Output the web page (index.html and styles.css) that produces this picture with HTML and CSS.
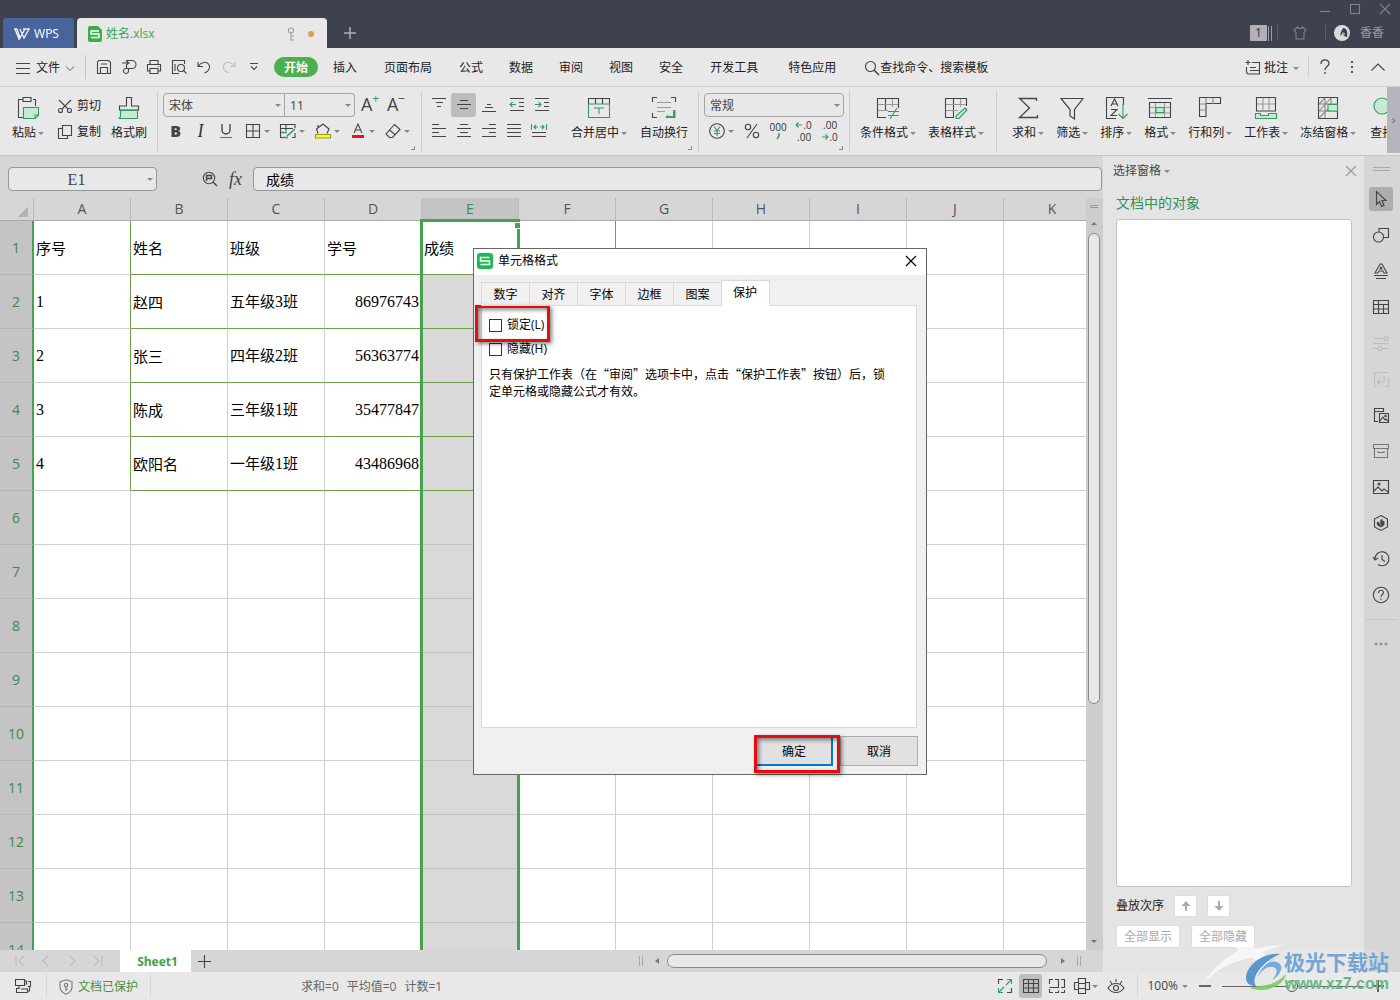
FILE: index.html
```html
<!DOCTYPE html>
<html lang="zh-CN">
<head>
<meta charset="utf-8">
<meta name="viewport" content="width=device-width, initial-scale=1">
<title>姓名.xlsx - WPS</title>
<link rel="stylesheet" href="styles.css">
</head>
<body>
<header class="titlebar">
  <button class="wps-tab"><svg class="ic" width="16" height="12" viewBox="0 0 16 12"><path d="M0 1h3M3 1l3 9 5-9M6 1l4 9 5-9H9M1 1l4 10 2-3" stroke-width="1.4"/></svg>WPS</button>
  <div class="doc-tab">
    <svg width="14" height="16" viewBox="0 0 14 16"><path d="M2 0h8l4 4v10a2 2 0 0 1-2 2H2a2 2 0 0 1-2-2V2a2 2 0 0 1 2-2z" fill="#3fae49"/><path d="M11 5H3v3h8v3.500H3" fill="none" stroke="#fff" stroke-width="1.400"/></svg>
    <span class="doc-name">姓名.xlsx</span>
    <svg class="ic faint" width="8" height="14" viewBox="0 0 8 14"><circle cx="4" cy="3.500" r="2.500"/><path d="M4 6v7h3M4 9h3"/></svg>
    <i class="dot"></i>
  </div>
  <button class="new-tab" aria-label="新建"><svg class="ic" width="12" height="12" viewBox="0 0 12 12"><path d="M6 0v12M0 6h12" stroke-width="1.500"/></svg></button>
  <div class="title-right">
    <div class="win-buttons">
      <button aria-label="最小化"><svg class="ic" width="10" height="10"><path d="M0 7.500h10"/></svg></button>
      <button aria-label="最大化"><svg class="ic" width="10" height="10"><path d="M.5.5h9v9h-9z"/></svg></button>
      <button aria-label="关闭"><svg class="ic" width="10" height="10"><path d="M0 0l10 10M10 0L0 10"/></svg></button>
    </div>
    <div class="account">
      <span class="badge">1</span><i class="bars"></i>
      <button class="skin" aria-label="皮肤"><svg class="ic" width="14" height="14" viewBox="0 0 14 14"><path d="M4.500 1L1 4l2 2.500V13h8V6.500L13 4 9.500 1C9 3 5 3 4.500 1z"/></svg></button>
      <svg class="avatar" width="16" height="16" viewBox="0 0 16 16"><circle cx="8" cy="8" r="8" fill="#d5dde2"/><path d="M9 3c4 0 5 4 4 9l-3-1-1-3-3 3 1-4z" fill="#413b43"/><path d="M8 7l3 1-1 4z" fill="#d79a87"/></svg>
      <span>香香</span>
    </div>
  </div>
</header>

<nav class="menubar">
  <button class="file-btn"><svg class="ic" width="14" height="11"><path d="M0 .5h14M0 5.500h14M0 10.500h14"/></svg>文件<svg class="ic faint" width="8" height="5"><path d="M0 .5l4 4 4-4"/></svg></button>
  <div class="quick">
    <button aria-label="保存"><svg class="ic" width="16" height="16" viewBox="0 0 16 16"><path d="M1.500 14V3L3 1.500h9.500l2 2V14.500h-13zM4.500 14V8.500h7V14M5 5h6"/></svg></button>
    <button aria-label="输出为PDF"><svg class="ic" width="16" height="16" viewBox="0 0 16 16"><path d="M1 4h8M5 1.500L7.500 4 5 6.500M6 1.500h5a4 4 0 0 1 0 8H5.500v-3M5.500 9.500a2.500 2.500 0 1 0 2 2.500V9.500"/></svg></button>
    <button aria-label="打印"><svg class="ic" width="16" height="16" viewBox="0 0 16 16"><path d="M4 5V1.500h8V5M4 12H1.500V5.500h13V12H12M4 9.500h8v5H4zM12 7.500h1"/></svg></button>
    <button aria-label="打印预览"><svg class="ic" width="16" height="16" viewBox="0 0 16 16"><path d="M8 14.500H1.500v-13h12V5M4 5v7"/><circle cx="10" cy="9" r="3.500"/><path d="M12.500 11.500l3 3"/></svg></button>
    <button aria-label="撤销"><svg class="ic" width="14" height="14" viewBox="0 0 14 14"><path d="M1 2v4.500h5M1 6.500C4 2 9 1 11.500 4s1 7-4 9"/></svg></button>
    <button aria-label="恢复"><svg class="ic ghost" width="14" height="14" viewBox="0 0 14 14"><path d="M13 2v4.500H8M13 6.500C10 2 5 1 2.500 4s-1 7 4 9"/></svg></button>
    <button aria-label="更多"><svg class="ic" width="8" height="8"><path d="M0 .5h8M1 3.500l3 3 3-3"/></svg></button>
  </div>
  <div class="tabs">
    <button class="active">开始</button><button>插入</button><button class="wide">页面布局</button><button>公式</button><button>数据</button><button>审阅</button><button>视图</button><button>安全</button><button class="wide">开发工具</button><button class="wide last">特色应用</button>
  </div>
  <button class="search"><svg class="ic" width="16" height="16" viewBox="0 0 16 16"><circle cx="6.500" cy="6.500" r="5"/><path d="M10 10l5 5" stroke-width="1.600"/></svg>查找命令、搜索模板</button>
  <div class="menu-right">
    <button class="comment"><svg class="ic" width="16" height="16" viewBox="0 0 16 16"><path d="M3 0v5M.5 2.500h5M7 2.500h7.500V14H3l-1.500-1.500V7M5 7.500h6M5 10.500h9"/></svg>批注<i class="caret"></i></button>
    <button class="help" aria-label="帮助"><svg class="ic" width="10" height="16" viewBox="0 0 10 16"><path d="M1 5C1-.5 9-.5 9 4.500c0 3-4 3-4 6.500M5 13v2" stroke-width="1.300"/></svg></button>
    <button class="opts" aria-label="选项"><svg width="4" height="14"><path d="M1 1h2v2H1zM1 6h2v2H1zM1 11h2v2H1z" fill="#555"/></svg></button>
    <button class="fold" aria-label="收起功能区"><svg class="ic" width="14" height="8"><path d="M.5 7.500L7 1l6.500 6.500"/></svg></button>
  </div>
</nav>

<section class="ribbon">
  <div class="group g-clip">
    <button class="big"><svg class="ic" width="24" height="24" viewBox="0 0 24 24"><path d="M7 3.500H2.500v18H7M17 3.500h2.500V10M7 1.500h8v4H7z"/><path class="gf" d="M7.500 11.500h15v8l-3.500 3H7.500z"/><path class="g" d="M22.500 19H19v3"/></svg><span>粘贴<i class="caret"></i></span></button>
    <div class="rows">
      <button class="txt"><svg class="ic" width="16" height="16" viewBox="0 0 16 16"><circle cx="3.500" cy="12.500" r="2"/><circle cx="12.500" cy="12.500" r="2"/><path d="M2 2l9 9M14 2l-9 9"/></svg>剪切</button>
      <button class="txt"><svg class="ic" width="16" height="16" viewBox="0 0 16 16"><path d="M5.500 1.500h9v10h-9zM5 4.500H1.500v10h9V12"/></svg>复制</button>
    </div>
    <button class="big"><svg class="ic" width="24" height="24" viewBox="0 0 24 24"><path d="M9.500 10V1.500h5V10h7v4h-19v-4z"/><path class="gf" d="M3.500 14.500h17v8h-19c2 0 2-2 2-3z"/></svg><span>格式刷</span></button>
  </div>

  <div class="group g-font">
    <div class="rows">
      <div class="row">
        <div class="joined">
          <span class="sel w-font"><select aria-label="字体"><option>宋体</option></select></span>
          <span class="sel w-size"><select aria-label="字号"><option>11</option></select></span>
        </div>
        <button class="sm letter" aria-label="增大字号">A<sup>+</sup></button>
        <button class="sm letter" aria-label="减小字号">A<sup class="k">−</sup></button>
      </div>
      <div class="row">
        <button class="sm bold" aria-label="加粗">B</button>
        <button class="sm ital" aria-label="倾斜">I</button>
        <button class="sm" aria-label="下划线"><svg class="ic" width="14" height="16" viewBox="0 0 14 16"><path d="M3 1v6a4 4 0 0 0 8 0V1" stroke-width="1.400"/><path class="g" d="M1 14.500h12"/></svg></button>
        <button class="smc" aria-label="边框"><svg class="ic" width="16" height="16"><path d="M1.500 1.500h13v13h-13zM8 2v12M2 8h12"/></svg><i class="caret"></i></button>
        <button class="smc" aria-label="绘图边框"><svg class="ic" width="16" height="16"><path d="M15 5V1.500H.5V14.500H5M1 5.500h12M6 2v6M15 10v4.500h-3"/><path class="g" d="M1 9.500h6M7 13l8-7M3 14.500h5" stroke-width="1.600"/></svg><i class="caret"></i></button>
        <button class="smc" aria-label="填充颜色"><svg class="ic" width="16" height="16"><path d="M3 10.500L1.500 6 8 1l6 5-2 4.500M3 4.500V2"/><path d="M.5 11.500h15v3.500H.5z" fill="#ff0" stroke="#9a9a30"/></svg><i class="caret"></i></button>
        <button class="smc" aria-label="字体颜色"><svg class="ic" width="16" height="16"><path d="M4 10l4-9 4 9M5.500 7h5"/><path d="M2 12h12v3H2z" fill="#e11" stroke="none"/></svg><i class="caret"></i></button>
        <button class="smc" aria-label="清除"><svg class="ic" width="16" height="16"><path d="M9.500 1.500l5.500 5-7.500 8h-3L1 11zM4.500 7l6 5"/></svg><i class="caret"></i></button>
      </div>
    </div>
    <i class="launcher"></i>
  </div>

  <div class="group g-align">
    <div class="rows">
      <div class="row">
        <button class="sm" aria-label="顶端对齐"><svg class="ic" width="16" height="16"><path d="M1 1.500h14M5 5.500h7M6 9.500h4"/></svg></button>
        <button class="sm on" aria-label="垂直居中"><svg class="ic" width="16" height="16"><path d="M4 3.500h8M1 7.500h14M4 11.500h8"/></svg></button>
        <button class="sm" aria-label="底端对齐"><svg class="ic" width="16" height="16"><path d="M6 7.500h4M4 10.500h8M1 14.500h14"/></svg></button>
        <button class="sm indent" aria-label="减少缩进"><svg class="ic" width="16" height="16"><path d="M1 1.500h14M10 5.500h5M10 9.500h5M1 13.500h14"/><path class="g" d="M1 7.500h6M3.500 5L1 7.500 3.500 10"/></svg></button>
        <button class="sm" aria-label="增加缩进"><svg class="ic" width="16" height="16"><path d="M1 1.500h14M10 5.500h5M10 9.500h5M1 13.500h14"/><path class="g" d="M1 7.500h6M4.500 5L7 7.500 4.500 10"/></svg></button>
      </div>
      <div class="row">
        <button class="sm" aria-label="左对齐"><svg class="ic" width="16" height="16"><path d="M1 1.500h7M1 5.500h14M1 9.500h7M1 13.500h14"/></svg></button>
        <button class="sm" aria-label="水平居中"><svg class="ic" width="16" height="16"><path d="M4 1.500h8M1 5.500h14M4 9.500h8M1 13.500h14"/></svg></button>
        <button class="sm" aria-label="右对齐"><svg class="ic" width="16" height="16"><path d="M8 1.500h7M1 5.500h14M8 9.500h7M1 13.500h14"/></svg></button>
        <button class="sm" aria-label="两端对齐"><svg class="ic" width="16" height="16"><path d="M1 1.500h14M1 5.500h14M1 9.500h14M1 13.500h14"/></svg></button>
        <button class="sm" aria-label="分散对齐"><svg class="ic" width="16" height="16"><path d="M1 9.500h14M1 13.500h14"/><path class="g" d="M.5 1v6M15.500 1v6M3 4h4M9 4h4M5 2L3 4l2 2M11 2l2 2-2 2"/></svg></button>
      </div>
    </div>
    <button class="big merge"><svg class="ic" width="24" height="24" viewBox="0 0 24 24"><path d="M1.500 8V2.500h21V8M8.500 2.500V8M15.500 2.500V8"/><path class="g" d="M1.500 8v13.500h21V8zM7 12h10M12 12v6"/></svg><span>合并居中<i class="caret"></i></span></button>
    <button class="big"><svg class="ic" width="24" height="24" viewBox="0 0 24 24"><path d="M.5 6V1.500H5M19 1.500h4.500V6M.5 17v4.500H5"/><path d="M5 6.500h14M5 11.500h14M5 15.500h8" stroke="#999"/><path d="M23.500 14v8H13l3-3.500V20h5v-6z" fill="#35a15e" stroke="none"/></svg><span>自动换行</span></button>
    <i class="launcher"></i>
  </div>

  <div class="group g-num">
    <div class="rows">
      <span class="sel w-num"><select aria-label="数字格式"><option>常规</option></select></span>
      <div class="row">
        <button class="smc" aria-label="货币"><svg class="ic" width="16" height="16"><circle cx="8" cy="8" r="7.300"/><path class="g" d="M5 3.500l3 4 3-4M8 7v6M5 8h6M5 10.500h6"/></svg><i class="caret"></i></button>
        <button class="sm" aria-label="百分比"><svg class="ic" width="16" height="16"><circle cx="4" cy="4" r="2.700"/><circle cx="12" cy="12" r="2.700"/><path d="M13 1L3 15"/></svg></button>
        <button class="sm tiny" aria-label="千位分隔"><span>000</span><svg class="ic" width="4" height="8"><path class="g" d="M2 1h1v2L1 6" stroke-width="1.500"/></svg></button>
        <button class="sm tiny" aria-label="增加小数"><span><svg class="ic" width="6" height="6"><path class="g" d="M0 3h6M2.500.5L0 3l2.500 2.500"/></svg>.0</span><span>.00</span></button>
        <button class="sm tiny" aria-label="减少小数"><span>.00</span><span><svg class="ic" width="6" height="6"><path class="g" d="M0 3h6M3.500.5L6 3 3.500 5.500"/></svg>.0</span></button>
      </div>
    </div>
    <i class="launcher"></i>
  </div>

  <div class="group g-style">
    <button class="big"><svg class="ic" width="24" height="24" viewBox="0 0 24 24"><path d="M10 21.500H1.500v-19h21V12M9.500 3v12"/><path d="M2 8.500h20M2 14.500h10M16.500 3v8" stroke="#999"/><path class="g" d="M12 15.500h11M12 19.500h11M21 12l-7 11"/></svg><span>条件格式<i class="caret"></i></span></button>
    <button class="big"><svg class="ic" width="24" height="24" viewBox="0 0 24 24"><path d="M10 21.500H1.500v-19h21V10M9.500 3v18"/><path d="M2 8.500h20M2 14.500h12M16.500 3v8" stroke="#999"/><path class="gf" d="M21 12l2 2-8 8.500h-3V20z"/></svg><span>表格样式<i class="caret"></i></span></button>
  </div>

  <div class="group g-data">
    <button class="big"><svg class="ic" width="24" height="24" viewBox="0 0 24 24"><path d="M20.500 5V2.500h-17l10 9.500-10 9.500h18V19" stroke-width="1.300"/></svg><span>求和<i class="caret"></i></span></button>
    <button class="big"><svg class="ic" width="24" height="24" viewBox="0 0 24 24"><path d="M1 2.500h22l-8.500 11V23L10 20v-6.500z" stroke-width="1.200"/></svg><span>筛选<i class="caret"></i></span></button>
    <button class="big"><svg class="ic" width="24" height="24" viewBox="0 0 24 24"><path d="M12 22.500H2.500v-21h17V9M7 10l3.500-7 3.500 7M8 8h5M7 13.500h6l-6 6h6"/><path class="g" d="M19 8v14M14.500 18l4.500 4.500 4.500-4.500"/></svg><span>排序<i class="caret"></i></span></button>
    <button class="big"><svg class="ic" width="24" height="24" viewBox="0 0 24 24"><path d="M0 2.500h24M1.500 6.500h21v15h-21z"/><path d="M2 11.500h20M2 17h20M7.500 7v14M16.500 7v14" stroke="#999"/><path class="gf" d="M8 11.500h8v5H8z"/></svg><span>格式<i class="caret"></i></span></button>
    <button class="big"><svg class="ic" width="24" height="24" viewBox="0 0 24 24"><path d="M1.500 1.500h21v6H8v13H1.500z"/><path d="M8 2v6H2M15 2v6M2 14h6" stroke="#888"/></svg><span>行和列<i class="caret"></i></span></button>
    <button class="big"><svg class="ic" width="24" height="24" viewBox="0 0 24 24"><path d="M2.500 15V1.500h19V15z"/><path d="M3 8h18M9 2v13M15 2v13" stroke="#999"/><path class="gf" d="M1.500 17.500h5v2h8v-2h8v5h-21z"/></svg><span>工作表<i class="caret"></i></span></button>
    <button class="big"><svg class="ic" width="24" height="24" viewBox="0 0 24 24"><path d="M2.500 1.500h19v21h-19z"/><path d="M9 2v20M15 2v6M3 8h18M3 15h18M3 8l6-6M3 15L15 2M3 22l9-9" stroke="#888"/><path class="gf" d="M12 8.500h9.500v6.500H12z"/></svg><span>冻结窗格<i class="caret"></i></span></button>
    <button class="big find"><svg class="ic" width="24" height="24" viewBox="0 0 24 24"><circle class="gf" cx="12" cy="10" r="8"/></svg><span>查找</span></button>
  </div>
  <button class="ribbon-more" aria-label="更多功能">›</button>
</section>

<main class="work">
  <section class="left">
    <div class="formula">
      <label class="name-box"><input aria-label="名称框" value="E1"></label>
      <button class="fx-zoom" aria-label="浏览"><svg class="ic" width="16" height="16"><circle cx="7" cy="7" r="5.700"/><path d="M4.500 10V4.500h5v3h-5M11 11l4 4" stroke-width="1.500"/></svg></button>
      <button class="fx" aria-label="插入函数">fx</button>
      <input class="fx-input" aria-label="编辑栏" value="成绩">
    </div>
    <div class="grid-area">
      <div class="sheet">
        <table>
          <colgroup><col class="c-head"><col span="11" class="c"></colgroup>
          <thead><tr><th class="corner"></th><th>A<th>B<th>C<th>D<th class="sel-h">E<th>F<th>G<th>H<th>I<th>J<th>K</tr></thead>
          <tbody>
          <tr class="b"><th>1<td>序号<td>姓名<td>班级<td>学号<td class="act">成绩<td><td><td><td><td><td></tr>
          <tr class="b"><th>2<td><span class="n">1</span><td>赵四<td>五年级<span class="n">3</span>班<td class="r n">86976743<td class="e"><td><td><td><td><td><td></tr>
          <tr class="b"><th>3<td><span class="n">2</span><td>张三<td>四年级<span class="n">2</span>班<td class="r n">56363774<td class="e"><td><td><td><td><td><td></tr>
          <tr class="b"><th>4<td><span class="n">3</span><td>陈成<td>三年级<span class="n">1</span>班<td class="r n">35477847<td class="e"><td><td><td><td><td><td></tr>
          <tr class="b"><th>5<td><span class="n">4</span><td>欧阳名<td>一年级<span class="n">1</span>班<td class="r n">43486968<td class="e"><td><td><td><td><td><td></tr>
          <tr><th>6<td><td><td><td><td class="e"><td><td><td><td><td><td></tr>
          <tr><th>7<td><td><td><td><td class="e"><td><td><td><td><td><td></tr>
          <tr><th>8<td><td><td><td><td class="e"><td><td><td><td><td><td></tr>
          <tr><th>9<td><td><td><td><td class="e"><td><td><td><td><td><td></tr>
          <tr><th>10<td><td><td><td><td class="e"><td><td><td><td><td><td></tr>
          <tr><th>11<td><td><td><td><td class="e"><td><td><td><td><td><td></tr>
          <tr><th>12<td><td><td><td><td class="e"><td><td><td><td><td><td></tr>
          <tr><th>13<td><td><td><td><td class="e"><td><td><td><td><td><td></tr>
          <tr><th>14<td><td><td><td><td class="e"><td><td><td><td><td><td></tr>
          </tbody>
        </table>
        <div class="selection"><i></i></div>
      </div>
      <div class="vscroll"><i class="split"></i><i class="arrow up"></i><i class="thumb"></i><i class="arrow down"></i></div>
    </div>
    <div class="sheetbar">
      <div class="sheet-nav">
        <button aria-label="第一个"><svg class="ic" width="10" height="10"><path d="M1 0v10M9 0L4 5l5 5"/></svg></button>
        <button aria-label="上一个"><svg class="ic" width="10" height="10"><path d="M7 0L2 5l5 5"/></svg></button>
        <button aria-label="下一个"><svg class="ic" width="10" height="10"><path d="M3 0l5 5-5 5"/></svg></button>
        <button aria-label="最后一个"><svg class="ic" width="10" height="10"><path d="M9 0v10M1 0l5 5-5 5"/></svg></button>
      </div>
      <button class="sheet-tab">Sheet1</button>
      <button class="sheet-add" aria-label="新建工作表"><svg class="ic" width="14" height="14"><path d="M7.500 1v13M1 7.500h13"/></svg></button>
      <div class="hscroll"><i class="grip"></i><i class="arrow lt"></i><i class="thumb"></i><i class="arrow rt"></i><i class="grip"></i></div>
    </div>
  </section>

  <aside class="pane">
    <div class="pane-head"><span>选择窗格<i class="caret"></i></span><button aria-label="关闭窗格"><svg class="ic faint" width="10" height="10"><path d="M0 0l10 10M10 0L0 10"/></svg></button></div>
    <h2>文档中的对象</h2>
    <div class="objects"></div>
    <div class="order"><span>叠放次序</span>
      <button aria-label="上移"><svg width="10" height="10"><path d="M5 0l4.500 5H6v5H4V5H.5z" fill="#aaa"/></svg></button>
      <button aria-label="下移"><svg width="10" height="10"><path d="M5 10l4.500-5H6V0H4v5H.5z" fill="#aaa"/></svg></button>
    </div>
    <div class="showhide"><button>全部显示</button><button>全部隐藏</button></div>
  </aside>

  <aside class="strip">
    <i class="handle"></i>
    <button class="on" aria-label="选择"><svg class="ic" width="18" height="18"><path d="M4.500 1.500v13l3-3 2 5 2.500-1-2-5h4z"/></svg></button>
    <button aria-label="形状"><svg class="ic" width="18" height="18"><path d="M7 6V2.500h9.500v9H12"/><circle cx="6.500" cy="11" r="5"/></svg></button>
    <button aria-label="艺术字"><svg class="ic" width="18" height="18"><path d="M3 11L8 2h2l5 9h-3l-1-2H7l-1 2zM8 7l1-2 1 2zM2 13.500h14M4 16.500h10"/></svg></button>
    <button aria-label="表格"><svg class="ic" width="18" height="18"><path d="M1.500 2.500h15v13h-15zM2 6.500h14M2 11h14M6.500 3v12M11.500 7v8"/></svg></button>
    <button aria-label="属性"><svg class="ic ghost" width="18" height="18"><path d="M1 4.500h11M16 4.500h1M1 9.500h15M1 14.500h5M10 14.500h7"/><circle cx="14" cy="4.500" r="2"/><circle cx="8" cy="14.500" r="2"/></svg></button>
    <button aria-label="替换"><svg class="ic ghost" width="18" height="18"><path d="M5 16.500H2.500v-14h9M16.500 7v9.500H13M6 12h6V6M8 9.500L5.500 12 8 14.500M12 2.500h4.500"/></svg></button>
    <button aria-label="图库"><svg class="ic" width="18" height="18"><path d="M6 15.500H2.500v-13h9V6M3 5.500h8M7.500 7.500h9v9h-9zM8 15l3-4 2 3 1-1 2 2"/><circle cx="13.500" cy="10" r=".8"/></svg></button>
    <button aria-label="素材"><svg class="ic mid" width="18" height="18"><path d="M1.500 2.500h15v4h-15zM2.500 6.500h13v9h-13zM6 9v1.500h6V9"/></svg></button>
    <button aria-label="图片"><svg class="ic" width="18" height="18"><path d="M1.500 2.500h15v13h-15zM2 13l4-4 4 4 2-2 4 3"/><circle cx="7" cy="6" r="1"/></svg></button>
    <button aria-label="稻壳"><svg class="ic" width="18" height="18"><path d="M9 1.500l6.500 3.500v8L9 16.500 2.500 13V5z"/><path d="M9 13c-4-1-4-3-4-5 2 0 3 1 4 5 3-1 4-3 3-6-2 0-3 2-3 6M9 10c-1-2-1-4 1-5 0 2 1 3-1 5" fill="#444" stroke-width=".5"/></svg></button>
    <button aria-label="历史"><svg class="ic" width="18" height="18"><path d="M3 9a7 7 0 1 1 3 5.500M1 7l2 3 3-2M10 5v4.500l3 2"/></svg></button>
    <button aria-label="帮助中心"><svg class="ic" width="18" height="18"><circle cx="9" cy="9" r="7.700"/><path d="M6.500 7c0-3.500 5-3.500 5-.5 0 2-2.500 2-2.500 4.500M9 12.500v1.500"/></svg></button>
    <hr>
    <button class="dots" aria-label="更多"><svg width="14" height="4"><g fill="none" stroke="#777"><circle cx="2" cy="2" r="1"/><circle cx="7" cy="2" r="1"/><circle cx="12" cy="2" r="1"/></g></svg></button>
  </aside>
</main>

<footer class="status">
  <button class="st-mode" aria-label="宏"><svg class="ic" width="18" height="16"><path d="M1.500 1.500h9v6h-9zM10.500 3h2v3h-2M14 3.500h2.500v5H14M5 7.500v3H2.500v4h11V11H7M13.500 13h2V8"/></svg></button>
  <div class="protect"><svg class="ic mid" width="16" height="16"><path d="M8 .8l6 2V8c0 3.500-3 6-6 7.300C5 14 2 11.500 2 8V2.800z"/><circle cx="8" cy="6" r="1.700"/><path d="M8 8v4M8 10h2"/></svg>文档已保护</div>
  <div class="stats"><span>求和=0</span><span>平均值=0</span><span>计数=1</span></div>
  <div class="views">
    <button aria-label="全屏"><svg class="ic" width="16" height="16"><path d="M1.500 6V1.500H6M14.500 10v4.500H10"/><path class="g" d="M9 7l5.500-5.500M10 1.500h4.500V6M7 9l-5.500 5.500M1.500 10v4.500H6"/></svg></button>
    <button class="on" aria-label="普通视图"><svg class="ic" width="16" height="16"><path d="M.5 1.500h15v13H.5zM1 5.500h14M1 10h14M5.500 2v12M10.500 2v12"/></svg></button>
    <button aria-label="分页预览"><svg class="ic" width="16" height="16"><path d="M.5 6V1.500H4M6 1.500h3.500v8H.5M12 1.500h3.500V9.500H12M.5 11v3.500H4M6 14.500h3.500v-2M12 14.500h3.500V12"/></svg></button>
    <button class="vc" aria-label="阅读模式"><svg class="ic" width="16" height="16"><path d="M4.500.5h7v15h-7zM4.500 5.500h7M4.500 10.500h7M4 4.500H.5v7H4M12 4.500h3.500v7H12"/></svg><i class="caret"></i></button>
    <button aria-label="护眼模式"><svg class="ic" width="18" height="16"><path d="M1 10c4-6 12-6 16 0-4 6-12 6-16 0zM9 1v3M3 3l2 3M15 3l-2 3"/><circle cx="9" cy="10" r="2.500"/></svg></button>
  </div>
  <div class="zoom">
    <button>100%<i class="caret"></i></button>
    <button class="minus" aria-label="缩小"><svg class="ic" width="12" height="12"><path d="M0 6h12" stroke-width="1.600"/></svg></button>
    <input type="range" min="0" max="100" value="50" aria-label="缩放">
    <button class="plus" aria-label="放大"><svg class="ic" width="12" height="12"><path d="M0 6h12M6 0v12" stroke-width="1.600"/></svg></button>
  </div>
</footer>

<section class="dialog" role="dialog" aria-label="单元格格式">
  <div class="dlg-title">
    <svg width="16" height="16"><rect width="16" height="16" rx="3" fill="#1dba50"/><path d="M12.500 4.500h-9v3.500h9v3.500h-9" fill="none" stroke="#fff" stroke-width="1.500"/></svg>
    <span>单元格格式</span>
    <button aria-label="关闭"><svg class="ic" width="10" height="10"><path d="M0 0l10 10M10 0L0 10" stroke="#000"/></svg></button>
  </div>
  <div class="dlg-tabs"><button>数字</button><button>对齐</button><button>字体</button><button>边框</button><button>图案</button><button class="active">保护</button></div>
  <div class="dlg-body">
    <label><input type="checkbox">锁定(L)</label>
    <label><input type="checkbox">隐藏(H)</label>
    <p>只有保护工作表（在“审阅”选项卡中，点击“保护工作表”按钮）后，锁定单元格或隐藏公式才有效。</p>
  </div>
  <div class="dlg-foot"><button class="ok">确定</button><button>取消</button></div>
  <i class="mark mark-lock"></i>
  <i class="mark mark-ok"></i>
</section>

<div class="watermark">
  <svg class="wm-streak" width="190" height="48" viewBox="0 0 190 48"><path d="M2 46C14 28 28 16 40 10L22 0l36 8 28-4-22 8 8 14-20-8C28 22 12 34 2 46z" fill="#fff" opacity=".65"/><path d="M50 10l130 0-8 34-90 0z" fill="#fff" opacity=".12"/></svg>
  <svg class="wm-logo" width="46" height="40" viewBox="0 0 46 40"><path d="M36 2C18 0 2 14 2 26c0 6 5 8 10 8-5-6 2-22 24-32z" fill="#4b8fc9"/><path d="M32 6c-10 4-18 14-18 20 2-7 9-12 15-11 5 1 5 6-1 13 10-6 13-16 4-18-2-1-5 0-8 1z" fill="#69a6d8"/><path d="M6 36c14 6 34-2 36-14-8 8-16 12-28 12z" fill="#7ccb62"/></svg>
  <div class="wm-text"><strong>极光下载站</strong><span>www.xz7.com</span></div>
</div>
</body>
</html>
```
FILE: styles.css
```css
* { box-sizing: border-box; }

body {
  margin: 0;
  height: 100vh;
  display: flex;
  flex-direction: column;
  position: relative;
  overflow: hidden;
  background: #e8e8e8;
  color: #222;
  font: 12px/16px "Open Sans", "Noto Sans CJK SC", sans-serif;
}

button, input, select { font: inherit; color: inherit; }
button { border: 0; background: none; padding: 0; display: flex; align-items: center; justify-content: center; white-space: nowrap; }
svg { display: block; flex: none; }

.ic { fill: none; stroke: #444; stroke-width: 1.1; overflow: visible; }
.ic .g { stroke: #2f9d60; }
.ic .gf { stroke: #2f9d60; fill: #c5ecd2; }
.faint { stroke: #999; }
.mid { stroke: #777; }
.ghost { stroke: #bdbdbd; }

.caret { width: 0; height: 0; border: 3px solid transparent; border-top-color: #888; border-bottom: 0; margin-left: 2px; flex: none; }

/* title bar */
.titlebar { flex: none; height: 48px; background: #3e424e; display: flex; align-items: flex-end; padding-left: 3px; color: #9a9ca6; }
.wps-tab { width: 71px; height: 30px; gap: 4px; padding: 2px 4px 0 0; background: #47649b; border-radius: 3px 3px 0 0; color: #fff; }
.wps-tab .ic { stroke: #eee; }
.doc-tab { width: 250px; height: 30px; margin-left: 3px; padding: 2px 13px 0 11px; display: flex; align-items: center; gap: 4px; background: #e8e8e8; border-radius: 4px 4px 0 0; color: #3fa447; }
.doc-name { flex: 1; }
.dot { width: 6px; height: 6px; margin-left: 9px; border-radius: 3px; background: #dd9c58; }
.new-tab { width: 46px; height: 30px; }
.new-tab .ic { stroke: #aeb0b8; }
.title-right { margin-left: auto; height: 48px; display: flex; flex-direction: column; align-items: flex-end; }
.win-buttons { display: flex; height: 18px; gap: 20px; padding-right: 10px; }
.win-buttons .ic, .skin .ic { stroke: #81838d; }
.account { display: flex; height: 30px; align-items: center; padding-right: 16px; }
.badge { width: 17px; height: 16px; background: #b0b1b8; color: #333; text-align: center; border-radius: 1px; }
.bars { width: 4px; height: 15px; border: solid #9a9ca6; border-width: 0 1px; margin-left: 1px; }
.skin { width: 49px; height: 16px; margin: 0 8px 0 5px; padding-right: 3px; border: solid #5a5d68; border-width: 0 1px; }
.avatar { margin-right: 10px; }

/* menu bar */
.menubar { flex: none; height: 39px; display: flex; align-items: center; border-bottom: 1px solid #d0d0d0; padding-left: 16px; }
.file-btn { gap: 6px; padding: 2px 11px 0 0; height: 24px; border-right: 1px solid #c4c4c4; }
.quick { display: flex; padding-left: 5px; }
.quick button { width: 25px; height: 24px; }
.tabs { display: flex; margin-left: 8px; }
.tabs button { height: 20px; padding: 2px 13px 0; }
.tabs .wide { padding: 2px 14px 0; }
.tabs .active { width: 44px; padding: 1px 0 0; margin-right: 2px; border-radius: 10px; background: #4caf50; color: #fff; font-weight: bold; }
.tabs .last { padding-left: 16px; }
.search { margin-left: 14px; padding-top: 1px; }
.menu-right { margin-left: auto; display: flex; align-items: center; padding-right: 15px; }
.menu-right .comment { gap: 3px; height: 22px; padding: 2px 9px 0 0; border-right: 1px solid #d2d2d2; }
.help { margin-left: 11px; }
.opts { margin-left: 20px; }
.fold { margin-left: 17px; }

/* ribbon */
.ribbon { flex: none; height: 69px; display: flex; position: relative; z-index: 1; overflow: hidden; border-bottom: 1px solid #c6c6c6; }
.group { flex: none; display: flex; position: relative; }
.group + .group::before { content: ""; width: 1px; margin: 4px 0; background: #ccc; }
.big { flex-direction: column; justify-content: flex-start; padding-top: 9px; gap: 5px; }
.big span { display: flex; align-items: center; }
.rows { display: flex; flex-direction: column; gap: 2px; padding-top: 6px; }
.row { display: flex; height: 24px; align-items: center; }
.txt { height: 24px; gap: 4px; padding-top: 1px; }
.g-clip { padding-left: 12px; padding-right: 10px; }
.g-clip .rows { margin: 0 10px 0 13px; }
.g-font { padding-right: 8px; }
.g-font .rows, .g-num .rows { padding-left: 5px; }
.g-align { padding-right: 10px; }
.g-align .rows { margin-right: 17px; padding-left: 4px; }
.indent { margin-left: 3px; }
.g-align .merge { margin-right: 13px; }
.g-num { padding-right: 5px; }
.g-num .smc { padding-left: 5px; }
.g-num .sm { width: 26px; }
.g-style { gap: 12px; padding-right: 12px; }
.g-style::before { margin-right: -2px !important; }
.g-data { gap: 12px; }
.g-data::before { margin-right: 3px !important; }
.find { margin-left: 2px; }
.sm { width: 25px; height: 24px; }
.sm.on { background: #bdbdbd; border-radius: 3px; }
.smc { width: 35px; height: 24px; padding-left: 7px; justify-content: flex-start; }
.smc .caret { margin-left: 3px; }
.letter { width: 26px; font-size: 18px; color: #444; align-items: flex-start; line-height: 22px; }
.joined + .letter { margin-left: 2px; }
.letter sup { font-size: 12px; line-height: 12px; color: #2f9d60; }
.letter .k { color: #444; }
.bold { font-weight: 800; font-size: 16px; color: #444; }
.ital { font: italic 18px/24px "Liberation Serif", serif; color: #333; }
.tiny { flex-direction: column; font-size: 10px; line-height: 12px; color: #333; }
.tiny span { display: flex; align-items: center; gap: 1px; height: 12px; }
.joined { display: flex; }
.joined .sel + .sel select { border-left: 0; border-radius: 0 4px 4px 0; }
.joined .sel:first-child select { border-radius: 4px 0 0 4px; }
.sel { position: relative; display: block; height: 24px; }
.sel select { appearance: none; width: 100%; height: 24px; border: 1px solid #a4a4a4; border-radius: 4px; background: #e8e8e8; padding: 1px 5px 0; color: #444; }
.sel::after, .name-box::after { content: ""; position: absolute; right: 4px; top: 11px; border: 3px solid transparent; border-top-color: #888; border-bottom: 0; }
.w-font { width: 122px; }
.w-size { width: 70px; }
.w-num { width: 140px; }
.launcher { position: absolute; right: 6px; bottom: 5px; width: 4px; height: 4px; border: solid #888; border-width: 0 1px 1px 0; }
.ribbon-more { position: absolute; right: 0; top: 0; width: 13px; height: 66px; background: #b5b6bd; color: #666; }

/* work area */
.work { flex: 1; min-height: 0; display: flex; background: #d6d6d6; }
.left { flex: 1; min-width: 0; display: flex; flex-direction: column; }
.formula { flex: none; height: 42px; display: flex; align-items: flex-start; padding: 11px 1px 0 8px; }
.name-box { position: relative; width: 149px; margin-right: 45px; }
.name-box input, .fx-input { width: 100%; height: 24px; border: 1px solid #979797; border-radius: 4px; background: #e8e8e8; }
.name-box input { text-align: center; padding: 2px 16px 0 4px; font: 16px/20px "Liberation Serif", serif; color: #444; }
.fx-zoom { height: 24px; }
.fx { width: 35px; height: 24px; font: italic 18px/24px "Liberation Serif", serif; color: #444; }
.fx-input { flex: 1; padding: 0 12px; font-size: 14px; color: #000; }
.grid-area { flex: 1; min-height: 0; display: flex; }
.sheet { flex: 1; min-width: 0; overflow: hidden; position: relative; background: #fff; }
table { table-layout: fixed; width: 1101px; border-collapse: separate; border-spacing: 0; }
.c-head { width: 34px; }
.c { width: 97px; }
th { font-weight: normal; font-size: 14px; padding: 0; }
thead th { height: 23px; background: #d6d6d6; color: #555; border-right: 1px solid #bbb; border-bottom: 1px solid #aaa; }
thead .corner { border-right: 1px solid #bbb; background: linear-gradient(135deg, #d6d6d6 50%, #b4b4b4 50%) right 5px bottom 3px / 11px 11px no-repeat #d6d6d6; }
thead .sel-h { background: #c4c4c4; color: #3c8a45; }
tbody th { height: 54px; background: #c4c4c4; color: #3c8a45; border-right: 2px solid #47a34b; border-bottom: 1px solid #b4b4b4; }
td { height: 54px; padding: 0 2px; border-right: 1px solid #d0d0d0; border-bottom: 1px solid #d0d0d0; font-size: 15px; line-height: 20px; color: #000; white-space: nowrap; }
.e { background: #d9d9d9; border-bottom-color: #c2c2c2; }
.b td:nth-child(2) { border-right-color: #6f9f48; }
.b td:nth-child(n+3):nth-child(-n+7) { border-bottom-color: #6f9f48; }
.b td:nth-child(7) { border-right-color: #6f9f48; }
.n { font-family: "Liberation Serif", serif; font-size: 16px; }
.r { text-align: right; }
/* outline of the selected column */
.selection { position: absolute; left: 420px; top: 21px; bottom: -4px; width: 100px; border: 3px solid #47a34b; }
.selection i { position: absolute; right: -4px; top: 0; width: 7px; height: 7px; background: #47a34b; border: 1px solid #fff; }

.vscroll { width: 17px; padding: 0 1px 7px 0; background: #cdcdcd; display: flex; flex-direction: column; align-items: center; }
.split { width: 8px; height: 3px; margin: 7px 0 11px; border: solid #999; border-width: 1px 0; }
.vscroll .thumb { flex: 0 0 471px; width: 12px; margin: 8px 0 auto; border: 1px solid #8a8a8a; border-radius: 6px; background: #e8e8e8; }
.arrow { border: 3px solid transparent; width: 0; height: 0; flex: none; }
.up { border-bottom-color: #777; border-top: 0; margin-top: 3px; }
.down { border-top-color: #777; border-bottom: 0; }
.lt { border-right: 4px solid #777; border-left: 0; }
.rt { border-left: 4px solid #777; border-right: 0; }

.sheetbar { flex: none; height: 22px; display: flex; align-items: center; }
.sheet-nav { display: flex; gap: 16px; width: 120px; padding-left: 15px; }
.sheet-nav .ic { stroke: #bdbdbd; }
.sheet-tab { width: 71px; height: 22px; padding: 1px 0 0 4px; background: #fff; color: #43a047; font-weight: bold; }
.sheet-add { width: 25px; }
.hscroll { margin-left: auto; display: flex; align-items: center; gap: 14px; padding-right: 22px; width: 464px; }
.hscroll .thumb { flex: 1; height: 14px; margin: 0 0 0 -6px; border: 1px solid #8a8a8a; border-radius: 7px; background: #e8e8e8; }
.hscroll .lt { margin-left: -2px; }
.hscroll .rt { margin-right: -2px; }
.grip { width: 4px; height: 10px; border: solid #aaa; border-width: 0 1px; }

/* selection pane */
.pane { flex: none; width: 261px; background: #e4e4e4; display: flex; flex-direction: column; padding: 6px 12px 24px 13px; }
.pane-head { display: flex; justify-content: space-between; align-items: center; height: 18px; margin: 0 -4px 0 -3px; color: #444; }
.pane-head span, .order { display: flex; align-items: center; }
.pane-head .caret { margin-left: 3px; }
.pane h2 { margin: 13px 0 6px; font-weight: normal; font-size: 14px; line-height: 20px; color: #339057; }
.objects { flex: 1; background: #fff; border: 1px solid #c2c2c2; border-radius: 3px; }
.order { margin: 8px 0; gap: 10px; height: 22px; }
.order button, .showhide button { height: 22px; background: #fff; border: 1px solid #ddd; border-radius: 2px; }
.order button { width: 23px; }
.showhide { display: flex; gap: 11px; color: #aaa; }
.showhide button { width: 64px; height: 23px; }

/* tool strip */
.strip { flex: none; width: 36px; display: flex; flex-direction: column; align-items: center; gap: 12px; padding-right: 1px; }
.handle { width: 17px; height: 4px; margin: 11px 0 4px; border: solid #aaa; border-width: 1px 0; }
.strip button { width: 24px; height: 24px; margin-right: 1px; }
.strip .on { background: #adadad; border-radius: 3px; }
.strip hr { width: 32px; margin: 0; border: 0; border-top: 1px solid #c6c6c6; }

/* status bar */
.status { flex: none; height: 28px; display: flex; align-items: center; padding: 0 16px 0 14px; background: #e8e8e8; color: #666; }
.st-mode { width: 33px; height: 24px; justify-content: flex-start; border-right: 1px solid #d6d6d6; }
.protect { display: flex; align-items: center; gap: 4px; height: 24px; padding: 1px 12px 0 11px; border-right: 1px solid #d6d6d6; color: #4c8f3c; }
.stats { display: flex; gap: 8px; margin-left: 150px; padding-top: 1px; }
.views { display: flex; margin-left: auto; gap: 3px; padding-right: 10px; border-right: 1px solid #d6d6d6; height: 24px; }
.views button { width: 23px; height: 24px; }
.views .on { background: #bdbdbd; border-radius: 3px; }
.views .vc { width: 30px; }
.zoom { display: flex; align-items: center; padding-left: 9px; color: #444; }
.zoom .caret { margin-left: 4px; }
.minus { margin: 0 11px; }
.zoom input { appearance: none; width: 140px; height: 14px; margin: 0; background: linear-gradient(#666, #666) center / 100% 1px no-repeat; }
.zoom input::-webkit-slider-thumb { appearance: none; width: 12px; height: 12px; border: 1px solid #555; border-radius: 6px; background: #e8e8e8; }
.plus { margin-left: 10px; }

/* cell format dialog */
.dialog { position: absolute; z-index: 5; left: 473px; top: 248px; width: 454px; height: 527px; display: flex; flex-direction: column; background: #f0f0f0; border: 1px solid #666; color: #000; }
.dlg-title { display: flex; align-items: center; gap: 5px; height: 26px; padding: 0 10px 2px 3px; background: #fff; }
.dlg-title button { margin-left: auto; }
.dlg-tabs { display: flex; align-items: flex-end; height: 31px; padding-left: 7px; position: relative; z-index: 1; }
.dlg-tabs button { width: 48px; height: 24px; padding-top: 2px; border: 1px solid #d9d9d9; border-right: 0; }
.dlg-tabs .active { width: 49px; height: 26px; padding: 0 1px 0 0; background: #fff; border-right: 1px solid #d9d9d9; border-bottom-color: #fff; }
.dlg-body { flex: 1; margin: -1px 9px 0 7px; padding: 11px 24px 0 7px; background: #fff; border: 1px solid #d9d9d9; }
.dlg-body label { display: flex; align-items: center; gap: 5px; height: 16px; margin-bottom: 8px; }
.dlg-body input { appearance: none; width: 13px; height: 13px; margin: 0; border: 1px solid #333; background: #fff; }
.dlg-body p { margin: 0; line-height: 17px; font-family: "Noto Sans CJK SC", sans-serif; }
.dlg-foot { display: flex; justify-content: flex-end; gap: 7px; height: 46px; padding: 8px 8px 8px 0; }
.dlg-foot button { width: 78px; padding-top: 1px; background: #e1e1e1; border: 1px solid #adadad; }
.dlg-foot .ok { border: 2px solid #0078d7; }
.mark { position: absolute; border: 3px solid #e01010; box-shadow: 2px 2px 4px #0007, inset 2px 2px 4px #0007; }
.mark-lock { left: 1px; top: 56px; width: 75px; height: 37px; }
.mark-ok { left: 280px; top: 486px; width: 86px; height: 38px; }

/* site watermark */
.watermark { position: absolute; z-index: 6; right: 11px; bottom: 6px; display: flex; align-items: center; pointer-events: none; }
.wm-streak { position: absolute; right: 0; bottom: 6px; }
.wm-logo { position: relative; margin-right: -6px; opacity: .9; }
.wm-text { position: relative; display: flex; flex-direction: column; align-items: flex-end; }
.wm-text strong { font-size: 21px; line-height: 24px; color: #73a5d6; }
.wm-text span { font: bold 16px/20px "Liberation Sans", sans-serif; color: #69b784; }
```
